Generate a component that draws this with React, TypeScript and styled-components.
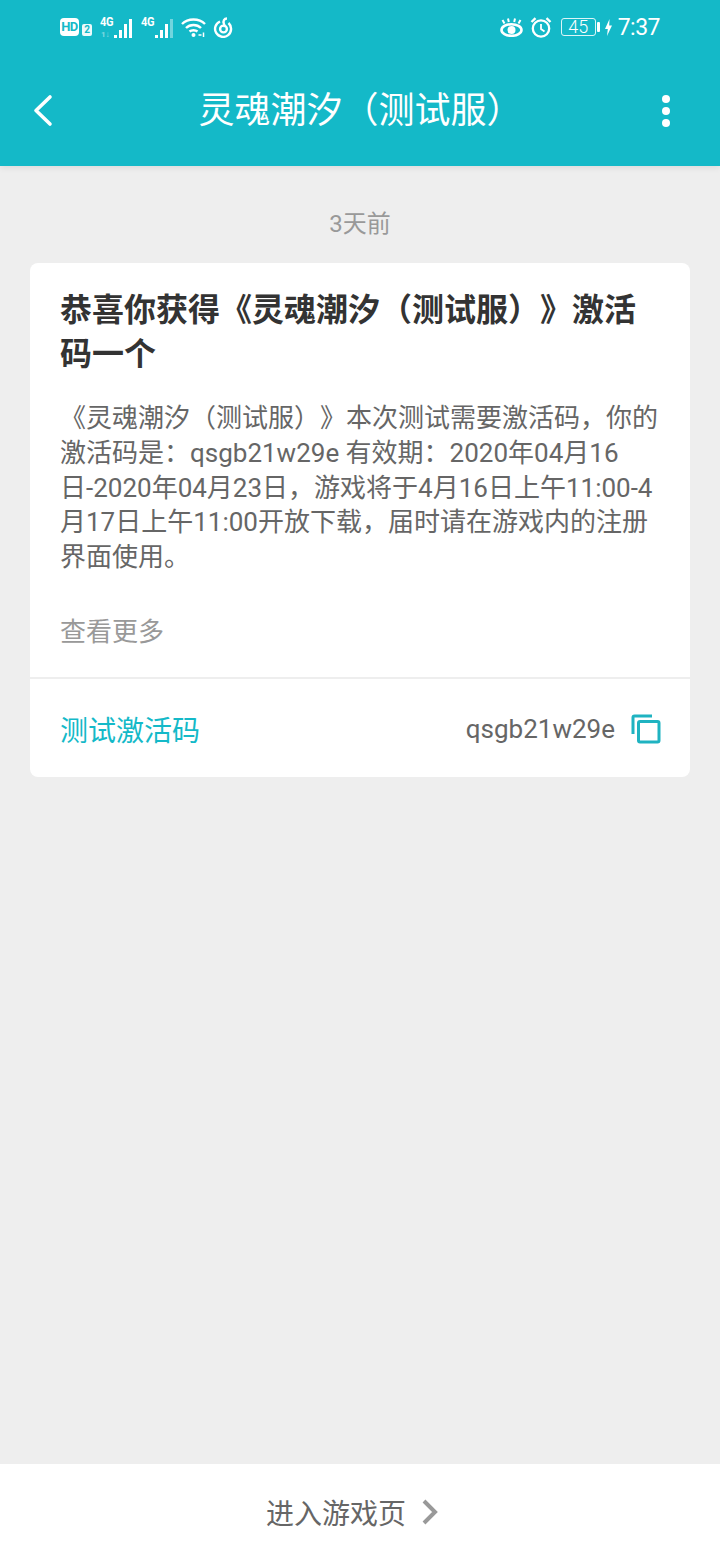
import React from 'react';
import styled, { createGlobalStyle } from 'styled-components';

const GlobalStyle = createGlobalStyle`
  html, body {
    margin: 0;
    padding: 0;
    background: #eeeeee;
  }
  * {
    box-sizing: border-box;
  }
`;

const CJK = `Roboto, "Noto Sans CJK SC", sans-serif`;

const Page = styled.div`
  width: 720px;
  height: 1560px;
  display: flex;
  flex-direction: column;
  background: #eeeeee;
  font-family: ${CJK};
  text-spacing-trim: space-all;
`;
const Header = styled.header`
  height: 166px;
  flex: none;
  background: #14b9c8;
  color: white;
  box-shadow: 0 2px 6px rgba(0, 0, 0, 0.08);
`;
const StatusBar = styled.div`
  height: 55px;
  padding: 15px 60px 0;
  display: flex;
  justify-content: space-between;
  align-items: flex-start;
`;
const StatusGroup = styled.div`
  height: 24px;
  display: flex;
  align-items: center;
`;
const HdBadge = styled.span`
  width: 19px;
  height: 18px;
  border-radius: 4px;
  background: white;
  color: #14b9c8;
  font: 700 13px/18px Roboto, sans-serif;
  text-align: center;
  letter-spacing: -0.5px;
`;
const SimBadge = styled.span`
  width: 10px;
  height: 12px;
  margin: 6px 7px 0 3px;
  border-radius: 2px;
  background: rgba(255, 255, 255, 0.92);
  color: #14b9c8;
  font: 700 10px/12px Roboto, sans-serif;
  text-align: center;
`;
const Signal = styled.div`
  position: relative;
  width: 34px;
  height: 22px;
  margin-right: 7px;
  margin-top: 2px;
`;
const NetLabel = styled.span`
  position: absolute;
  left: 1px;
  top: -2px;
  font: 700 13px/13px Roboto, sans-serif;
  letter-spacing: -0.5px;
  transform: scaleX(0.85);
  transform-origin: left center;
`;
const RoamLabel = styled.span`
  position: absolute;
  left: 2px;
  bottom: 0;
  font: 700 8px/8px Roboto, sans-serif;
  opacity: 0.45;
`;
const Spacer = styled.span<{ $w: number }>`
  flex: none;
  width: ${(p) => p.$w}px;
`;
const BatteryBox = styled.div`
  width: 35px;
  height: 18px;
  border: 1px solid rgba(255, 255, 255, 0.85);
  border-radius: 3px;
  font: 300 18px/16px Roboto, sans-serif;
  text-align: center;
`;
const BatteryTip = styled.div`
  width: 3px;
  height: 10px;
  margin: 0 5px 0 1px;
  background: white;
  border-radius: 1px;
`;
const Clock = styled.span`
  margin: 2px 0 0 6px;
  font: 400 23px/24px Roboto, sans-serif;
  letter-spacing: -0.5px;
`;
const NavBar = styled.div`
  height: 111px;
  padding: 0 48px 0 30px;
  display: flex;
  align-items: center;
  justify-content: space-between;
`;
const NavTitle = styled.h1`
  margin: 0 0 0 7px;
  font-size: 36px;
  font-weight: 400;
  line-height: 50px;
  white-space: nowrap;
`;
const Main = styled.main`
  flex: 1;
  padding: 42px 30px 0;
`;
const Time = styled.div`
  text-align: center;
  font-size: 24px;
  line-height: 32px;
  color: #999999;
`;
const Card = styled.section`
  margin-top: 23px;
  background: white;
  border-radius: 8px;
`;
const CardBody = styled.div`
  height: 416px;
  padding: 25px 30px 0;
  border-bottom: 2px solid #eeeeee;
`;
const CardTitle = styled.h2`
  margin: 0 0 25px;
  font-size: 32px;
  font-weight: 700;
  line-height: 44px;
  color: #333333;
`;
const CardText = styled.p`
  margin: 0;
  font-size: 26px;
  line-height: 34.8px;
  color: #666666;
`;
const More = styled.div`
  margin-top: 39px;
  font-size: 26px;
  line-height: 36px;
  color: #999999;
`;
const CodeRow = styled.div`
  height: 98px;
  padding: 2px 29px 0 30px;
  display: flex;
  align-items: center;
  justify-content: space-between;
`;
const CodeLabel = styled.span`
  font-size: 28px;
  color: #14b9c8;
`;
const CodeValue = styled.div`
  display: flex;
  align-items: center;
  gap: 16px;
  font-size: 26px;
  color: #666666;
`;
const Footer = styled.footer`
  height: 96px;
  flex: none;
  padding-right: 16px;
  background: white;
  display: flex;
  align-items: center;
  justify-content: center;
  gap: 16px;
  font-size: 28px;
  color: #666666;
`;

const barHeights = [3, 8, 14, 19];

// signal bars, the dimmed one is the unused level
const Bars = ({ dim }: { dim?: number }) => (
  <svg
    width="20"
    height="20"
    viewBox="0 0 20 20"
    style={{ position: 'absolute', right: 0, bottom: 1 }}
  >
    {barHeights.map((h, i) => (
      <rect
        key={h}
        x={1 + i * 5}
        y={20 - h}
        width="3"
        height={h}
        fill="white"
        opacity={dim === i ? 0.4 : 1}
      />
    ))}
  </svg>
);

const WifiIcon = () => (
  <svg width="25" height="20" viewBox="0 0 25 20" fill="none" stroke="white" strokeWidth="2.400">
    <path d="M1 7C7 1 18 1 24 7" />
    <path d="M5 11C9 7 16 7 20 11" />
    <path d="M8.500 14.500C10.500 12.800 14.500 12.800 16.500 14.500" />
    <circle cx="12.500" cy="18" r="2" fill="white" stroke="none" />
    <path d="M17.500 18h3M22.500 15.500v4.500" strokeWidth="1.500" />
  </svg>
);

const NeteaseIcon = () => (
  <svg width="20" height="21" viewBox="0 0 20 21" fill="none" stroke="white" strokeWidth="2.400">
    <path d="M7 4.500A8 8 0 1 0 15.500 6" />
    <path d="M14 1.500C11 1.500 10 4 10.800 6.500L12 10" />
    <circle cx="10.500" cy="12" r="3.400" />
  </svg>
);

const EyeIcon = () => (
  <svg width="23" height="19" viewBox="0 0 23 19" fill="none" stroke="white" strokeWidth="2.600">
    <ellipse cx="11.500" cy="12" rx="10" ry="5.800" />
    <circle cx="11.500" cy="12" r="4" fill="white" stroke="none" />
    <path d="M2.500 2l2 3.500M8 0.500l0.800 3.500M15 0.500l-0.800 3.500M20.500 2l-2 3.500" strokeWidth="2" />
  </svg>
);

const AlarmIcon = () => (
  <svg width="22" height="21" viewBox="0 0 22 21" fill="none" stroke="white" strokeWidth="2.300">
    <circle cx="11" cy="11.500" r="8.200" />
    <path d="M11 7v5l3.500 2.500" strokeWidth="1.800" />
    <path d="M1.500 5L5.500 1.200M20.500 5L16.500 1.200" strokeWidth="2.400" />
  </svg>
);

const BoltIcon = () => (
  <svg width="7" height="17" viewBox="0 0 7 17">
    <path d="M4.500 0L0 10h2.800L2 17l5-10.500H4.200z" fill="white" />
  </svg>
);

const BackIcon = () => (
  <svg width="24" height="36" viewBox="0 0 24 36" fill="none" stroke="white" strokeWidth="3.600" strokeLinecap="round" strokeLinejoin="round">
    <path d="M20 4L6 17.500l14 13.500" />
  </svg>
);

const MoreIcon = () => (
  <svg width="12" height="34" viewBox="0 0 12 34" fill="white">
    <circle cx="6" cy="5" r="4" />
    <circle cx="6" cy="17" r="4" />
    <circle cx="6" cy="29" r="4" />
  </svg>
);

const CopyIcon = () => (
  <svg width="30" height="30" viewBox="0 0 30 30" fill="none" stroke="#1fb3c1" strokeWidth="3">
    <path d="M2 20V3.500A1.500 1.500 0 0 1 3.500 2H21" />
    <rect x="7.500" y="7.500" width="20.500" height="20.500" rx="1.500" />
  </svg>
);

const ChevronIcon = () => (
  <svg width="16" height="26" viewBox="0 0 16 26" fill="none" stroke="#999999" strokeWidth="4" strokeLinejoin="miter">
    <path d="M2 2l11 11L2 24" />
  </svg>
);

export default function App() {
  return (
    <Page>
      <GlobalStyle />
      <Header>
        <StatusBar>
          <StatusGroup>
            <HdBadge>HD</HdBadge>
            <SimBadge>2</SimBadge>
            <Signal>
              <NetLabel>4G</NetLabel>
              <RoamLabel>1↓</RoamLabel>
              <Bars />
            </Signal>
            <Signal>
              <NetLabel>4G</NetLabel>
              <Bars dim={3} />
            </Signal>
            <WifiIcon />
            <Spacer $w={7} />
            <NeteaseIcon />
          </StatusGroup>
          <StatusGroup>
            <EyeIcon />
            <Spacer $w={7} />
            <AlarmIcon />
            <Spacer $w={9} />
            <BatteryBox>45</BatteryBox>
            <BatteryTip />
            <BoltIcon />
            <Clock>7:37</Clock>
          </StatusGroup>
        </StatusBar>
        <NavBar>
          <BackIcon />
          <NavTitle>灵魂潮汐（测试服）</NavTitle>
          <MoreIcon />
        </NavBar>
      </Header>
      <Main>
        <Time>3天前</Time>
        <Card>
          <CardBody>
            <CardTitle>恭喜你获得《灵魂潮汐（测试服）》激活码一个</CardTitle>
            <CardText>
              《灵魂潮汐（测试服）》本次测试需要激活码，你的激活码是：qsgb21w29e 有效期：2020年04月16日-2020年04月23日，游戏将于4月16日上午11:00-4月17日上午11:00开放下载，届时请在游戏内的注册界面使用。
            </CardText>
            <More>查看更多</More>
          </CardBody>
          <CodeRow>
            <CodeLabel>测试激活码</CodeLabel>
            <CodeValue>
              qsgb21w29e
              <CopyIcon />
            </CodeValue>
          </CodeRow>
        </Card>
      </Main>
      <Footer>
        进入游戏页
        <ChevronIcon />
      </Footer>
    </Page>
  );
}
